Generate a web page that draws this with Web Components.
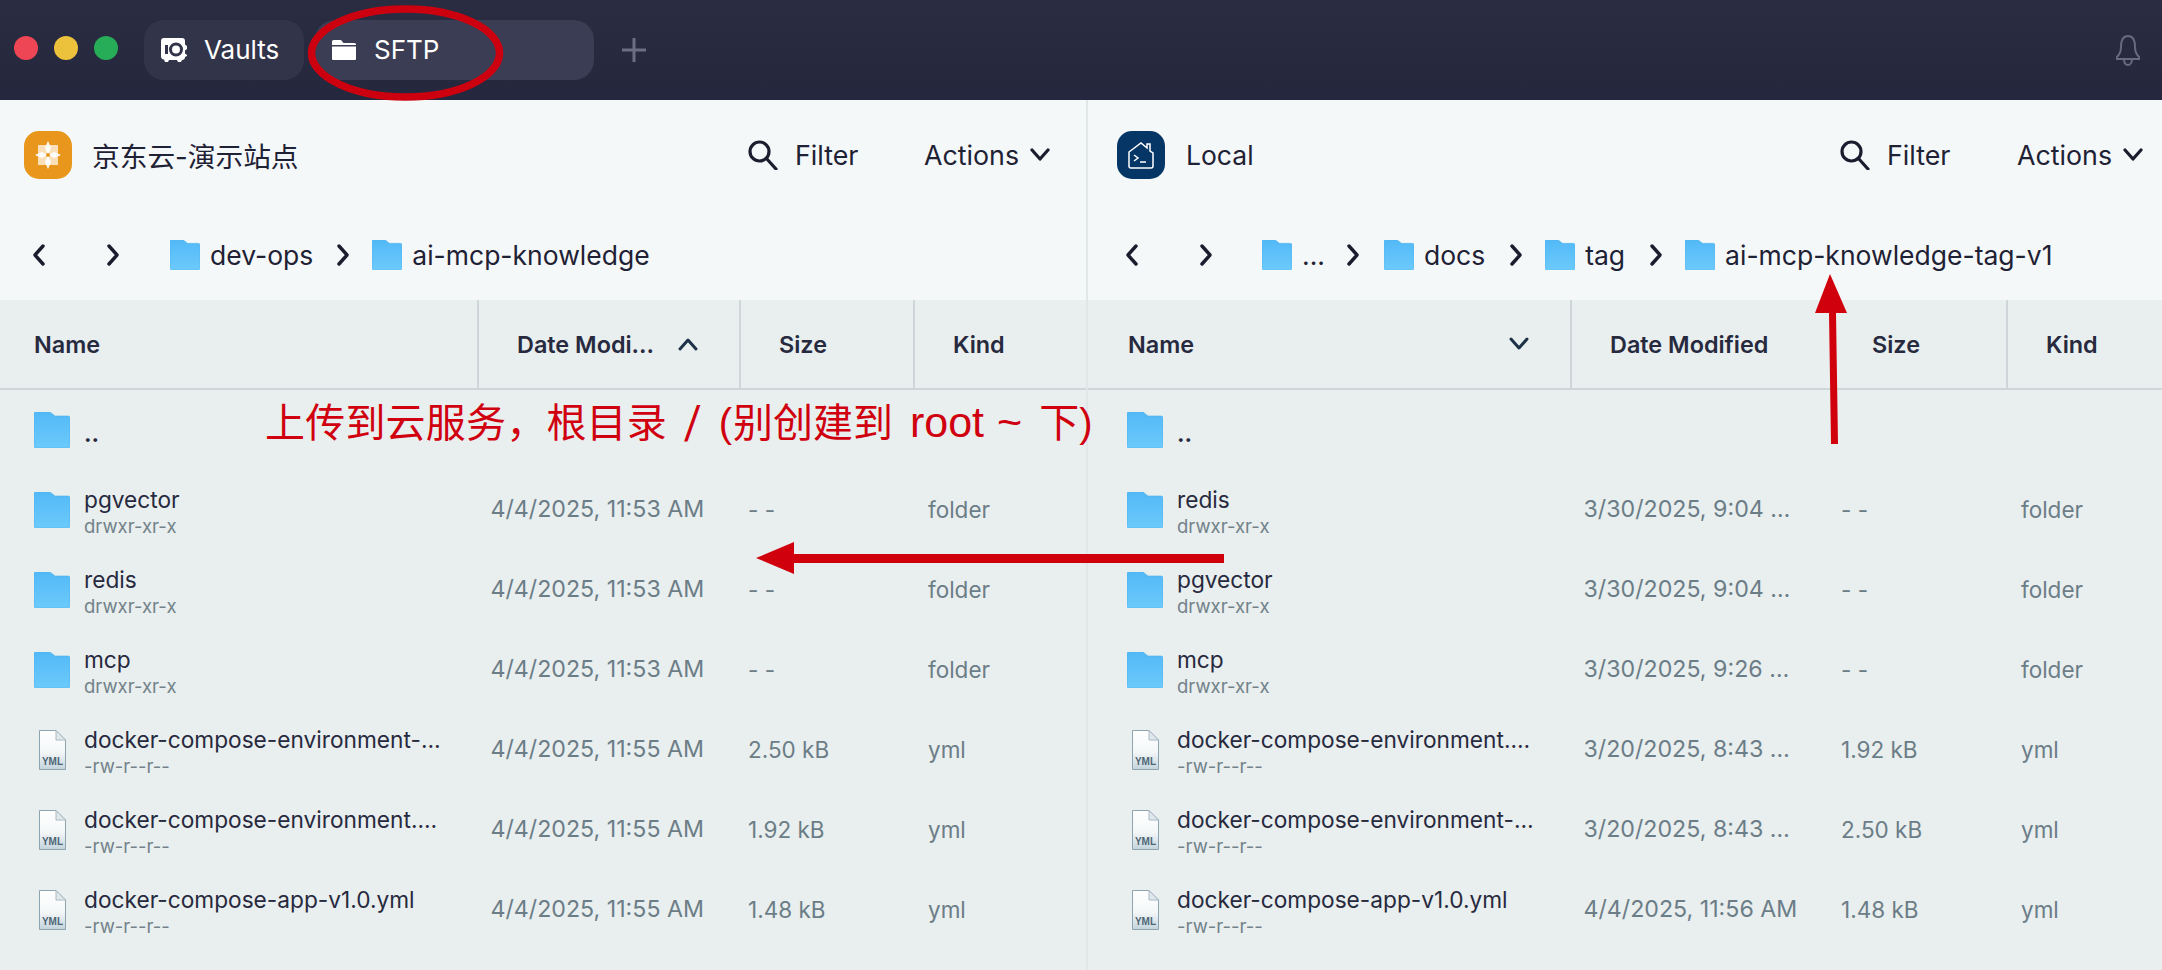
<!DOCTYPE html>
<html><head><meta charset="utf-8">
<style>
html,body{margin:0;padding:0;background:#e9eeee;overflow:hidden}
body{width:2162px;height:970px;position:relative;font-family:Inter,"Noto Sans CJK SC",sans-serif}
#panes{display:grid;grid-template-columns:1086px 1fr;height:870px}
</style></head><body>
<template id="t-title"><style>
:host{display:flex;height:100px;background:linear-gradient(#2a2c41,#25273e);align-items:center;box-sizing:border-box;padding:0 0 0 14px;color:#fff;font:26px/1 Inter,sans-serif}
.d{width:24px;height:24px;border-radius:50%;margin-right:16px;position:relative;top:-2px}
.tab{height:60px;border-radius:20px;display:flex;align-items:center;box-sizing:border-box}
.v{width:160px;background:#32344a;padding-left:16px}
.s{width:279px;background:#3b3d54;margin-left:11px;padding-left:17px}
.v span{margin-left:16px}.s span{margin-left:18px}
.plus{margin-left:27px}.sp{flex:1}.bell{margin-right:21px}
</style><i class="d" style="background:#ef4655"></i><i class="d" style="background:#ecc13c"></i><i class="d" style="background:#27ad58;margin-right:26px"></i>
<div class="tab v"><svg width="28" height="28" viewBox="0 0 28 28"><path fill="#fff" d="M5 2h17a3 3 0 0 1 3 3v3.500l2 1.500v3l-2 1.500v3l2 1.500v1l-2 1a3 3 0 0 1-3 3l-1 2h-3l-1-2H9l-1 2H5l-1-2.500a3 3 0 0 1-3-2.500V5a3 3 0 0 1 3-3z"/><rect x="5" y="9" width="3" height="9" fill="#32344a"/><circle cx="16" cy="13.500" r="5.500" fill="none" stroke="#32344a" stroke-width="3"/></svg><span>Vaults</span></div>
<div class="tab s"><svg width="24" height="22" viewBox="0 0 24 22"><path fill="#fff" d="M0 2.500A1.500 1.500 0 0 1 1.500 1H9l2.500 3h11A1.500 1.500 0 0 1 24 5.500V6H0zM0 7.500h24V20a1 1 0 0 1-1 1H1a1 1 0 0 1-1-1z"/></svg><span>SFTP</span></div>
<svg class="plus" width="26" height="26" viewBox="0 0 26 26"><path d="M13 1v24M1 13h24" stroke="#6c6e85" stroke-width="3"/></svg>
<div class="sp"></div>
<svg class="bell" width="26" height="32" viewBox="0 0 26 32" fill="none" stroke="#686a80" stroke-width="2"><path d="M13 2c-5 0-7 5-7 11 0 5-2 8-4 10v2h22v-2c-2-2-4-5-4-10 0-6-2-11-7-11zM9 25c0 4 2 6 4 6s4-2 4-6"/></svg>
</template>

<template id="t-folder"><style>:host{display:inline-flex;flex:none}svg{display:block}</style>
<svg viewBox="0 0 36 36"><defs><linearGradient id="g" x1="0" y1="0" x2="0" y2="1"><stop offset="0" stop-color="#52b9f7"/><stop offset="1" stop-color="#6ccafb"/></linearGradient></defs><path fill="url(#g)" stroke="#4fb0ea" stroke-width=".6" d="M1.500 0h14.500l5 4h13a2 2 0 0 1 2 2v28a2 2 0 0 1-2 2H2a2 2 0 0 1-2-2V1.500A1.500 1.500 0 0 1 1.500 0z"/></svg>
</template>

<template id="t-yml"><style>:host{display:inline-flex;flex:none}svg{display:block}text{font:bold 10px "Liberation Sans",sans-serif;fill:#4d6675}</style>
<svg width="27" height="40" viewBox="0 0 27 40"><defs><linearGradient id="f" x1="0" y1="0" x2="0" y2="1"><stop offset="0" stop-color="#fff"/><stop offset=".55" stop-color="#f4f7f8"/><stop offset="1" stop-color="#c3d3dc"/></linearGradient></defs><path fill="url(#f)" stroke="#8ea3b0" d="M.5.500H17L26.500 10v29.500H.5z"/><path fill="#e1e8ec" stroke="#a9bac4" d="M17 .5V10h9.500z"/><text x="13.500" y="35" text-anchor="middle">YML</text></svg>
</template>

<template id="t-chev"><style>:host{display:inline-flex;flex:none}svg{display:block}</style><svg width="14" height="22" viewBox="0 0 14 22" fill="none" stroke="#1b1d2f" stroke-width="3.400" stroke-linecap="round" stroke-linejoin="round"><path id="p" d="M3 2l8 9-8 9"/></svg></template>

<template id="t-pane"><style>
:host{display:block;height:870px;position:relative;color:#1f2134}
.top{background:#f4f8f9;height:200px;box-sizing:border-box}
.h1{height:110px;display:flex;align-items:center;padding:0 0 0 var(--lp,24px)}
.ttl{font-size:26.500px;margin-left:var(--tm,20px);flex:1}
.flt{font-size:26.800px;display:flex;align-items:center}
.flt span{margin-left:17px;width:var(--fw,129px)}
.act{font-size:26.800px;display:flex;align-items:center;width:var(--aw,162px)}
.act svg{margin-left:11px}
.h2{height:90px;display:flex;align-items:center}
</style>
<div class="top"><div class="h1"><slot name="logo"></slot><div class="ttl"><slot name="title"></slot></div>
<div class="flt"><svg width="30" height="30" viewBox="0 0 30 30" fill="none" stroke="#1b1d2f" stroke-width="3.200"><circle cx="11.500" cy="11.500" r="9.500"/><path d="M18.500 18.500L28 29" stroke-linecap="round"/></svg><span>Filter</span></div>
<div class="act">Actions<svg width="20" height="14" viewBox="0 0 20 14" fill="none" stroke="#1b1d2f" stroke-width="3.200" stroke-linecap="round" stroke-linejoin="round"><path d="M2 2l8 9 8-9"/></svg></div></div>
<div class="h2"><slot name="crumbs"></slot></div></div>
<slot></slot>
</template>

<template id="t-crumbs"><style>
:host{display:flex;align-items:center;height:60px;font-size:26.500px;color:#1f2134;padding-left:var(--cp,32px);width:100%;box-sizing:border-box}
</style><slot></slot></template>

<template id="t-crumb"><style>
:host{display:inline-flex;align-items:center;font-size:26.500px;margin-left:var(--ml,0)}
x-folder{width:30px;height:30px;margin-right:10px}
span{white-space:nowrap}
</style><x-folder></x-folder><span><slot></slot></span></template>

<template id="t-header"><style>
:host{display:grid;height:90px;background:#e9eeee;border-bottom:2px solid #cfd6da;box-sizing:border-box;font-weight:600;font-size:23.400px;color:#272a3e;align-items:center}
</style><slot></slot></template>

<template id="t-th"><style>
:host{display:flex;align-items:center;height:88px;box-sizing:border-box;border-left:2px solid #cfd6da;padding-left:38px;white-space:nowrap;position:relative}
:host(.first){border-left:0;padding-left:var(--fp,34px)}
</style><slot></slot><slot name="ic"></slot></template>

<template id="t-row"><style>
:host{display:grid;height:80px;align-items:center;color:#6b7d87;font-size:22.500px;position:relative}
.n{display:flex;align-items:center;min-width:0}
.ic{width:50px;display:flex;flex:none}
.txt{min-width:0;position:relative;top:2px}
.nm{color:#272a3e;font-size:22.700px;line-height:26px;white-space:nowrap}
.sb{color:#72828a;font-size:18.500px;line-height:22px;margin-top:2px;white-space:nowrap}
#d{font-size:23.200px}
#d,#s,#k{position:relative;top:-1px}
</style><div class="n"><div class="ic" id="ic"></div><div class="txt"><div class="nm" id="nm"></div><div class="sb" id="sb"></div></div></div><div id="d"></div><div id="s"></div><div id="k"></div></template>

<template id="t-note"><style>
:host{position:absolute;left:0;top:0;width:2162px;height:970px;display:block;pointer-events:none}
svg{position:absolute;left:0;top:0}
.t{position:absolute;left:265px;top:392px;font:40px/56px "Noto Sans CJK SC",sans-serif;color:#d0000f;white-space:nowrap;display:flex;align-items:baseline}
.l{font-family:"Liberation Sans",sans-serif}
.sl{display:inline-block;font-family:Inter,sans-serif;font-weight:300;font-size:42px;transform:scaleX(1.3);margin-left:18px}
.cj{letter-spacing:.2px}
</style>
<svg width="2162" height="970" viewBox="0 0 2162 970">
<ellipse cx="405.500" cy="53" rx="94" ry="44" fill="none" stroke="#cc000e" stroke-width="7.500"/>
<path fill="#d0000c" d="M756 558l38-16v12h430v9H794v11z"/>
<path fill="#d0000c" d="M1830 274l17 39h-11l2 131h-7l-2-131h-14z"/>
</svg><div class="t"><span class="cj">上传到云服务，根目录</span><span class="sl">/</span><span class="l" style="margin-left:19px">(</span><span style="margin-left:1px">别创建到</span><span class="l" style="margin-left:17px;font-size:43px">root</span><span class="l" style="margin-left:13px;font-size:43px">~</span><span style="margin-left:17px">下</span><span class="l">)</span></div></template>

<x-title></x-title>
<div id="panes">
<x-pane id="L"></x-pane>
<x-pane id="R" style="border-left:2px solid #e1e6e9;--lp:29px;--cp:37px;--fp:40px;--aw:145px;--fw:130px;--tm:21px"></x-pane>
</div>
<x-note></x-note>

<script>
const tpl=id=>document.getElementById(id).content.cloneNode(true);
class Base extends HTMLElement{constructor(){super();this.attachShadow({mode:'open'}).appendChild(tpl(this.constructor.t))}}
const def=(n,t,c=class extends Base{})=>{c.t=t;customElements.define(n,c)};
def('x-title','t-title');def('x-folder','t-folder');def('x-yml','t-yml');
def('x-chev','t-chev',class extends Base{connectedCallback(){if(this.hasAttribute('back'))this.shadowRoot.getElementById('p').setAttribute('d','M11 2l-8 9 8 9')}});
def('x-crumbs','t-crumbs');def('x-crumb','t-crumb');def('x-header','t-header');def('x-th','t-th');def('x-note','t-note');
def('x-row','t-row',class extends Base{connectedCallback(){const a=k=>this.getAttribute(k)||'',r=this.shadowRoot;
 this.style.gridTemplateColumns=a('cols');
 const i=document.createElement(a('kind')=='yml'?'x-yml':'x-folder');
 r.getElementById('ic').appendChild(i);
 if(a('kind')=='yml')i.style.marginLeft='5px';else{i.style.width='36px';i.style.height='36px'}
 for(const k of ['nm','sb','d','s','k'])r.getElementById(k).textContent=a(k);
 if(a('nm')=='..')r.getElementById('nm').style.cssText='font-weight:700;position:relative;top:3px';
 r.querySelector('.n').style.paddingLeft=a('pl');
 r.getElementById('d').style.paddingLeft='13.500px';r.getElementById('s').style.paddingLeft='9px';r.getElementById('k').style.paddingLeft='15px';
}});
def('x-pane','t-pane');
function build(p,o){
 const cols=o.cols;
 let h=`<div slot="logo" style="width:48px;height:48px;border-radius:15px;background:${o.bg};display:flex;align-items:center;justify-content:center">${o.logo}</div><span slot="title" style="${o.ts||''}">${o.title}</span>`;
 h+=`<x-crumbs slot="crumbs">${o.crumbs}</x-crumbs>`;
 h+=`<x-header style="grid-template-columns:${cols}">${o.th}</x-header>`;
 for(const r of o.rows)h+=`<x-row cols="${cols}" pl="${o.pl}" kind="${r[5]||'folder'}" nm="${r[0]}" sb="${r[1]}" d="${r[2]}" s="${r[3]}" k="${r[4]}"></x-row>`;
 p.innerHTML=h;
}
const D='drwxr-xr-x',F='-rw-r--r--';
const caret=(d,r)=>`<svg slot="ic" width="20" height="14" viewBox="0 0 20 14" fill="none" stroke="#1d3247" stroke-width="3" stroke-linecap="round" stroke-linejoin="round" style="position:absolute;top:37px;right:${r}px"><path d="${d}"/></svg>`;
build(document.getElementById('L'),{cols:'477px 262px 174px 173px',pl:'34px',bg:'#e9971c',title:'京东云-演示站点',ts:'font-size:27.700px',
logo:`<svg width="26" height="30" viewBox="0 0 26 30"><path fill="#fbdfb8" d="M3 5h20v20H3z"/><path fill="#fff" d="M13 1l3 7-3 7-3-7zM13 29l3-7-3-7-3 7zM0 15l7-3 6 3-6 3zM26 15l-7-3-6 3 6 3z"/><circle cx="13" cy="15" r="2" fill="#e9971c"/></svg>`,
crumbs:`<x-chev back></x-chev><x-chev style="margin-left:60px"></x-chev><x-crumb style="--ml:50px">dev-ops</x-crumb><x-chev style="margin-left:23px"></x-chev><x-crumb style="--ml:22px">ai-mcp-knowledge</x-crumb>`,
th:`<x-th class="first">Name</x-th><x-th>Date Modi...${caret('M2 12l8-9 8 9',41)}</x-th><x-th>Size</x-th><x-th>Kind</x-th>`,
rows:[['..','','','','',''],['pgvector',D,'4/4/2025, 11:53 AM','- -','folder'],['redis',D,'4/4/2025, 11:53 AM','- -','folder'],['mcp',D,'4/4/2025, 11:53 AM','- -','folder'],
['docker-compose-environment-…',F,'4/4/2025, 11:55 AM','2.50 kB','yml','yml'],['docker-compose-environment.…',F,'4/4/2025, 11:55 AM','1.92 kB','yml','yml'],['docker-compose-app-v1.0.yml',F,'4/4/2025, 11:55 AM','1.48 kB','yml','yml']]});
build(document.getElementById('R'),{cols:'482px 262px 174px 156px',pl:'39px',bg:'#063665',title:'Local',
logo:`<svg width="28" height="28" viewBox="0 0 28 28" fill="none" stroke="#fff" stroke-width="1.500"><path d="M2 11L14 2l6 5V3h3v7l3 2v13a2 2 0 0 1-2 2H4a2 2 0 0 1-2-2z"/><path d="M7 14l4 3-4 3M13 21h6"/></svg>`,
crumbs:`<x-chev back></x-chev><x-chev style="margin-left:60px"></x-chev><x-crumb style="--ml:49px">...</x-crumb><x-chev style="margin-left:21px"></x-chev><x-crumb style="--ml:24px">docs</x-crumb><x-chev style="margin-left:24px"></x-chev><x-crumb style="--ml:22px">tag</x-crumb><x-chev style="margin-left:24px"></x-chev><x-crumb style="--ml:22px">ai-mcp-knowledge-tag-v1</x-crumb>`,
th:`<x-th class="first">Name${caret('M2 2l8 9 8-9',41)}</x-th><x-th>Date Modified</x-th><x-th>Size</x-th><x-th>Kind</x-th>`,
rows:[['..','','','','',''],['redis',D,'3/30/2025, 9:04 …','- -','folder'],['pgvector',D,'3/30/2025, 9:04 …','- -','folder'],['mcp',D,'3/30/2025, 9:26 …','- -','folder'],
['docker-compose-environment.…',F,'3/20/2025, 8:43 …','1.92 kB','yml','yml'],['docker-compose-environment-…',F,'3/20/2025, 8:43 …','2.50 kB','yml','yml'],['docker-compose-app-v1.0.yml',F,'4/4/2025, 11:56 AM','1.48 kB','yml','yml']]});
</script>
</body></html>
